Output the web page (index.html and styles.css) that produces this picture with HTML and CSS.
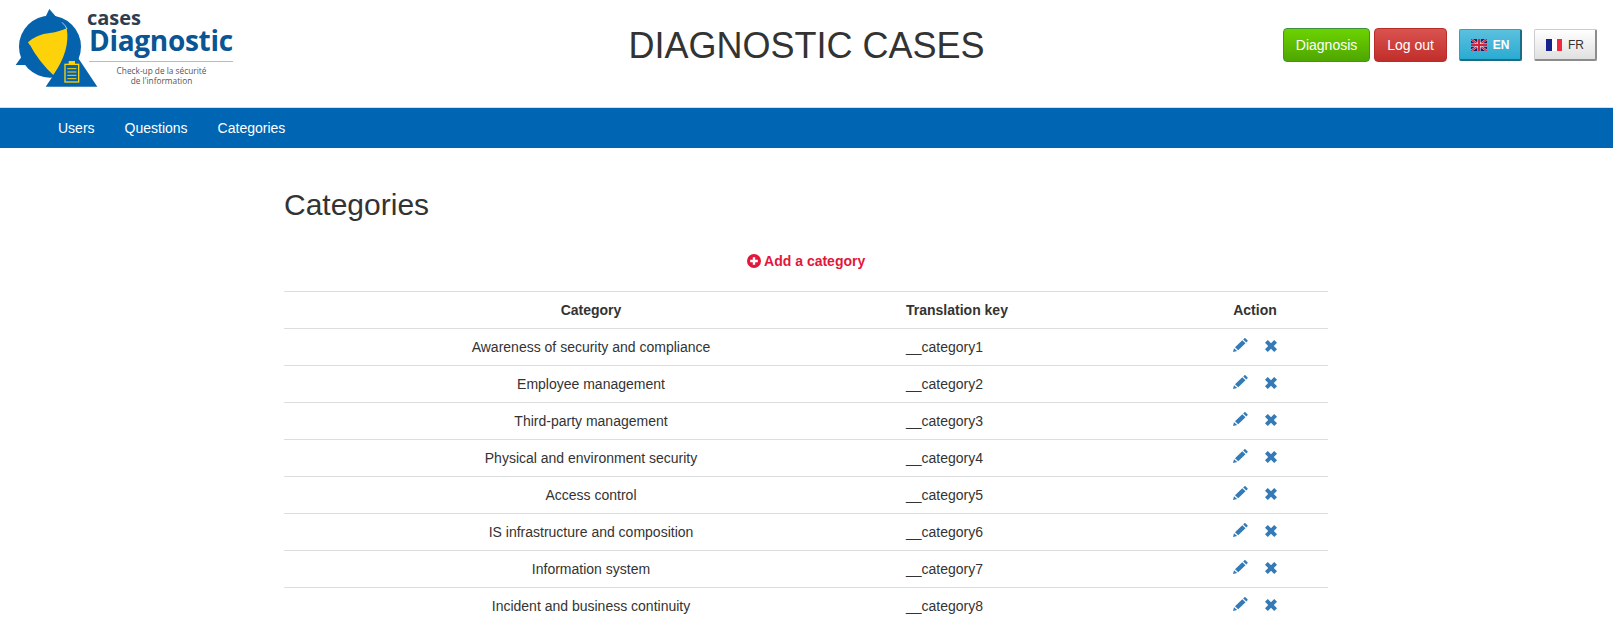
FILE: index.html
```html
<!DOCTYPE html>
<html lang="en">
<head>
    <meta charset="UTF-8">
    <title>Diagnostic cases</title>
    <link rel="stylesheet" href="styles.css">
</head>
<body>
    <svg class="icon-defs">
        <symbol id="icon-pencil" viewBox="0 0 15 14">
            <path d="M0 14L1 10.200L4.200 13Z M2 9.300L9.300 2.300L12.500 5.200L5.200 12.200Z M10.200 1.500L11.400 .3Q11.900 -.1 12.400 .3L14.500 2.200Q14.900 2.700 14.500 3.200L13.300 4.400Z" fill="#337ab7"/>
        </symbol>
        <symbol id="icon-remove" viewBox="0 0 12 12">
            <path d="M2.800 0L6 3.200L9.200 0L12 2.800L8.800 6L12 9.200L9.200 12L6 8.800L2.800 12L0 9.200L3.200 6L0 2.800Z" fill="#337ab7"/>
        </symbol>
    </svg>

    <header class="header">
        <div class="logo">
            <svg class="logo-mark" width="90" height="90" viewBox="0 0 270 270">
                <circle cx="120" cy="125" r="93" fill="#0563ad"/>
                <path d="M54 112Q80 88 120 84Q150 80 170 70Q182 135 130 210Q90 175 54 112Z" fill="#fdd20a"/>
                <path d="M118 12L168 70Q135 72 118 76Q95 78 84 82Z" fill="#0563ad"/>
                <path d="M156 52Q167 62 171 72" fill="none" stroke="#fff" stroke-width="2"/>
                <path d="M60 120L92 180L17 180Z" fill="#0563ad"/>
                <path d="M185 130L262 245H107Z" fill="#0563ad"/>
                <rect x="165" y="178" width="41" height="53" fill="none" stroke="#fdd20a" stroke-width="4"/>
                <rect x="176" y="168" width="19" height="12" fill="#fdd20a"/>
                <path d="M172 191H199M172 201H199M172 211H199M172 221H199" stroke="#fdd20a" stroke-width="3"/>
            </svg>
            <div class="logo-text">
                <div class="logo-cases">cases</div>
                <div class="logo-name">Diagnostic</div>
                <div class="logo-sub">Check-up de la sécurité<br>de l'information</div>
            </div>
        </div>
        <h1 class="site-title">DIAGNOSTIC CASES</h1>
        <div class="header-actions">
            <a class="btn btn-green" href="#">Diagnosis</a>
            <a class="btn btn-red" href="#">Log out</a>
            <a class="btn-lang btn-lang-on" href="#">
                <svg width="16" height="12" viewBox="0 0 16 12">
                    <rect width="16" height="12" fill="#14206b"/>
                    <path d="M0 0L16 12M16 0L0 12" stroke="#fff" stroke-width="2"/>
                    <path d="M0 0L16 12M16 0L0 12" stroke="#d3233a" stroke-width="1.400"/>
                    <path d="M8 0V12M0 6H16" stroke="#fff" stroke-width="3"/>
                    <path d="M8 0V12M0 6H16" stroke="#d3233a" stroke-width="2"/>
                </svg>
                EN
            </a>
            <a class="btn-lang btn-lang-off" href="#">
                <svg width="16" height="12" viewBox="0 0 16 12">
                    <rect width="6" height="12" fill="#14248c"/>
                    <rect x="6" width="5" height="12" fill="#fff"/>
                    <rect x="11" width="5" height="12" fill="#f0293e"/>
                </svg>
                FR
            </a>
        </div>
    </header>

    <nav class="navbar">
        <a href="#">Users</a>
        <a href="#">Questions</a>
        <a href="#">Categories</a>
    </nav>

    <main class="container">
        <h2 class="page-title">Categories</h2>
        <p class="add-row">
            <a class="add-link" href="#">
                <svg width="14" height="14" viewBox="0 0 14 14">
                    <circle cx="7" cy="7" r="7" fill="#e2173b"/>
                    <path d="M7 3.200v7.600M3.200 7h7.600" stroke="#fff" stroke-width="2.400"/>
                </svg>
                Add a category
            </a>
        </p>
        <table class="table">
            <thead>
                <tr>
                    <th class="col-name">Category</th>
                    <th class="col-key">Translation key</th>
                    <th>Action</th>
                </tr>
            </thead>
            <tbody>
                <tr>
                    <td>Awareness of security and compliance</td>
                    <td class="col-key">__category1</td>
                    <td class="actions">
                        <a href="#"><svg class="icon-pencil"><use href="#icon-pencil"/></svg></a>
                        <a href="#"><svg class="icon-remove"><use href="#icon-remove"/></svg></a>
                    </td>
                </tr>
                <tr>
                    <td>Employee management</td>
                    <td class="col-key">__category2</td>
                    <td class="actions">
                        <a href="#"><svg class="icon-pencil"><use href="#icon-pencil"/></svg></a>
                        <a href="#"><svg class="icon-remove"><use href="#icon-remove"/></svg></a>
                    </td>
                </tr>
                <tr>
                    <td>Third-party management</td>
                    <td class="col-key">__category3</td>
                    <td class="actions">
                        <a href="#"><svg class="icon-pencil"><use href="#icon-pencil"/></svg></a>
                        <a href="#"><svg class="icon-remove"><use href="#icon-remove"/></svg></a>
                    </td>
                </tr>
                <tr>
                    <td>Physical and environment security</td>
                    <td class="col-key">__category4</td>
                    <td class="actions">
                        <a href="#"><svg class="icon-pencil"><use href="#icon-pencil"/></svg></a>
                        <a href="#"><svg class="icon-remove"><use href="#icon-remove"/></svg></a>
                    </td>
                </tr>
                <tr>
                    <td>Access control</td>
                    <td class="col-key">__category5</td>
                    <td class="actions">
                        <a href="#"><svg class="icon-pencil"><use href="#icon-pencil"/></svg></a>
                        <a href="#"><svg class="icon-remove"><use href="#icon-remove"/></svg></a>
                    </td>
                </tr>
                <tr>
                    <td>IS infrastructure and composition</td>
                    <td class="col-key">__category6</td>
                    <td class="actions">
                        <a href="#"><svg class="icon-pencil"><use href="#icon-pencil"/></svg></a>
                        <a href="#"><svg class="icon-remove"><use href="#icon-remove"/></svg></a>
                    </td>
                </tr>
                <tr>
                    <td>Information system</td>
                    <td class="col-key">__category7</td>
                    <td class="actions">
                        <a href="#"><svg class="icon-pencil"><use href="#icon-pencil"/></svg></a>
                        <a href="#"><svg class="icon-remove"><use href="#icon-remove"/></svg></a>
                    </td>
                </tr>
                <tr>
                    <td>Incident and business continuity</td>
                    <td class="col-key">__category8</td>
                    <td class="actions">
                        <a href="#"><svg class="icon-pencil"><use href="#icon-pencil"/></svg></a>
                        <a href="#"><svg class="icon-remove"><use href="#icon-remove"/></svg></a>
                    </td>
                </tr>
            </tbody>
        </table>
    </main>
</body>
</html>
```

FILE: styles.css
```css
* {
    box-sizing: border-box;
}
body {
    margin: 0;
    font-family: "Liberation Sans", Arial, sans-serif;
    font-size: 14px;
    line-height: 20px;
    color: #333;
    background-color: #fff;
}
a {
    text-decoration: none;
}
.icon-defs {
    display: none;
}
.header {
    display: grid;
    grid-template-columns: 1fr auto 1fr;
    align-items: start;
    height: 107px;
}
.logo {
    display: flex;
    padding: 5px 0 0 10px;
}
.logo-mark {
    flex: none;
}
.logo-text {
    width: 144px;
    margin: 5px 0 0 -11px;
    color: #0a5594;
    font-family: "Open Sans", sans-serif;
}
.logo-cases {
    font-size: 20px;
    line-height: 16px;
    font-weight: 700;
    color: #2d3e50;
    margin-left: -2px;
}
.logo-name {
    font-size: 28px;
    line-height: 28px;
    font-weight: 700;
    letter-spacing: -0.3px;
    padding-bottom: 7px;
    border-bottom: 1px solid #b8bcc4;
}
.logo-sub {
    font-size: 8.3px;
    line-height: 10px;
    color: #555;
    text-align: center;
    margin-top: 4px;
    padding-left: 1px;
}
.site-title {
    margin: 26px 0 0;
    font-size: 36px;
    line-height: 40px;
    font-weight: 500;
}
.header-actions {
    display: flex;
    align-items: center;
    justify-self: end;
    padding: 28px 16px 0 0;
}
.btn {
    display: block;
    height: 34px;
    padding: 6px 12px;
    border: 1px solid;
    border-radius: 4px;
    color: #fff;
    margin-right: 4px;
}
.btn-green {
    background: linear-gradient(#6cd300, #4fa600);
    border-color: #3e8f3e;
}
.btn-red {
    background: linear-gradient(#d9534f, #c12e2a);
    border-color: #b92c28;
    margin-right: 12px;
}
.btn-lang {
    display: flex;
    align-items: center;
    justify-content: center;
    gap: 6px;
    width: 63px;
    height: 32px;
    font-size: 12px;
    border-radius: 2px;
}
.btn-lang-on {
    font-weight: 700;
    color: #fff;
    background: linear-gradient(#5bc0de, #2aabd2);
    border: 1px solid #28a4c9;
    border-right: 2px solid #1b6d85;
    border-bottom: 2px solid #1b6d85;
    margin-right: 12px;
}
.btn-lang-off {
    color: #333;
    background: linear-gradient(#fff, #e0e0e0);
    border: 1px solid #ccc;
    border-right: 2px solid #8c8c8c;
    border-bottom: 2px solid #8c8c8c;
}
.navbar {
    display: flex;
    height: 41px;
    padding-left: 43px;
    background-color: #0065b3;
    border-top: 1px solid #ddd;
}
.navbar a {
    padding: 10px 15px;
    color: #fff;
}
.container {
    width: 1075px;
    margin: 0 auto;
    padding: 0 16px 0 15px;
}
.page-title {
    margin: 40px 0 10px;
    font-size: 30px;
    line-height: 33px;
    font-weight: 500;
}
.add-row {
    margin: 0 0 20px;
    padding-top: 20px;
    text-align: center;
}
.add-link {
    font-weight: 700;
    color: #e2173b;
}
.add-link svg {
    vertical-align: -2px;
}
.table {
    width: 100%;
    table-layout: fixed;
    border-collapse: collapse;
    text-align: center;
}
.table th,
.table td {
    padding: 8px;
    border-top: 1px solid #ddd;
}
.table .col-name {
    width: 614px;
}
.table .col-key {
    width: 284px;
    text-align: left;
}
.actions a + a {
    margin-left: 13px;
}
.actions svg {
    vertical-align: 0;
}
.icon-pencil {
    width: 15px;
    height: 14px;
}
.icon-remove {
    width: 12px;
    height: 12px;
}
```
